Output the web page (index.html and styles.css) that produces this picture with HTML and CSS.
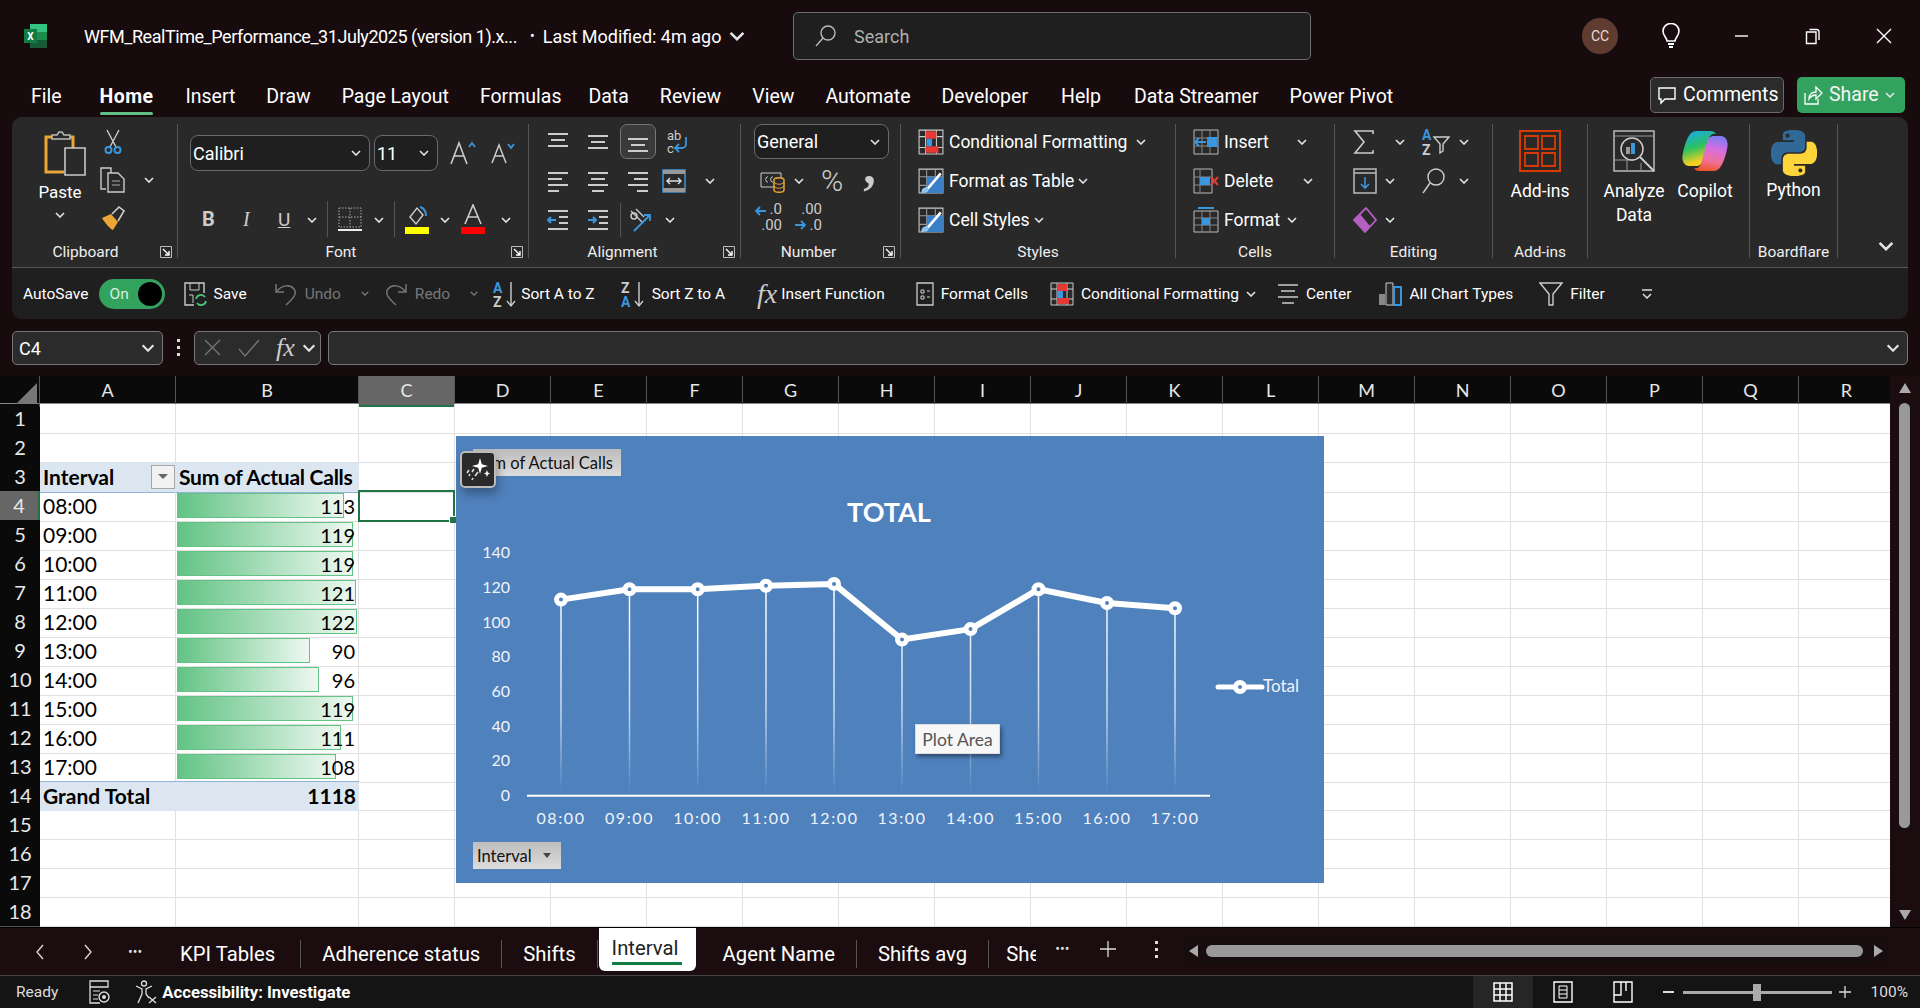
FILE: index.html
```html
<!DOCTYPE html>
<html>
  <head>
    <meta charset="UTF-8">
    <title>WFM_RealTime_Performance</title>
    <link rel="stylesheet" href="styles.css">
  </head>
  <body>
    <svg class="defs" width="0" height="0">
      <symbol id="chev" viewBox="0 0 10 6"><path d="M1 1l4 4 4-4" fill="none" stroke="#e4e4e4" stroke-width="1.6"/></symbol>
      <symbol id="launch" viewBox="0 0 12 12"><path d="M.5.5h11v11H.5z" fill="none" stroke="#bbb"/><path d="M3 3l6 6M9 5v4H5" fill="none" stroke="#fff" stroke-width="1.4"/></symbol>
      <symbol id="al-top" viewBox="0 0 24 24"><path d="M2 4h20M5 10h14M2 16h20" stroke="#ccc" stroke-width="2"/></symbol>
      <symbol id="al-mid" viewBox="0 0 24 24"><path d="M2 6h20M5 12h14M2 18h20" stroke="#ccc" stroke-width="2"/></symbol>
      <symbol id="al-bot" viewBox="0 0 24 24"><path d="M2 9h20M5 15h14M2 21h20" stroke="#ccc" stroke-width="2"/></symbol>
      <symbol id="al-left" viewBox="0 0 24 24"><path d="M2 4h20M2 10h14M2 16h20M2 22h11" stroke="#ccc" stroke-width="2"/></symbol>
      <symbol id="al-center" viewBox="0 0 24 24"><path d="M2 4h20M5 10h14M2 16h20M6 22h12" stroke="#ccc" stroke-width="2"/></symbol>
      <symbol id="al-right" viewBox="0 0 24 24"><path d="M2 4h20M8 10h14M2 16h20M11 22h11" stroke="#ccc" stroke-width="2"/></symbol>
      <symbol id="cf" viewBox="0 0 24 24"><path d="M1 1h22v22H1z" fill="#2a2a2a" stroke="#ccc"/><path d="M7 1v22M17 1v22M1 7h22M1 17h22" stroke="#ccc"/><path d="M7 2h10v7H7zM7 16h12v6H7z" fill="#e53935"/><path d="M8 9h5v7H8z" fill="#3a96dd"/></symbol>
      <symbol id="brushgrid" viewBox="0 0 24 24"><path d="M1 1h22v22H1z" fill="none" stroke="#ccc"/><path d="M8 1v22M16 1v22M1 8h22M1 16h22" stroke="#999"/><path d="M8 8h15v15H8z" fill="#3a80c8"/><path d="M21 5L9 19" stroke="#fff" stroke-width="2.4"/><path d="M3 23c0-4 3-6 6-5l1 2c-1 3-4 3-7 3z" fill="#8dc4ee"/></symbol>
    </svg>

    <div class="app">
      <header class="titlebar">
        <svg class="xl-logo" width="26" height="26" viewBox="0 0 26 26">
          <path d="M7 1h17v24H7z" fill="#1d8a4e"/><path d="M7 1h17v8H7z" fill="#33c481"/><path d="M7 17h17v8H7z" fill="#185c37"/>
          <path d="M1 6h13v14H1z" fill="#107c41"/>
          <text x="7.5" y="17" text-anchor="middle" class="xl-x">X</text>
        </svg>
        <span class="doc-name">WFM_RealTime_Performance_31July2025 (version 1).x...</span>
        <span class="doc-dot">•</span>
        <span class="doc-mod">Last Modified: 4m ago</span>
        <svg class="doc-chev" width="16" height="10"><use href="#chev"/></svg>
        <div class="search">
          <svg width="24" height="24" viewBox="0 0 24 24"><circle cx="14" cy="9" r="7" fill="none" stroke="#bbb" stroke-width="1.4"/><path d="M9 14l-7 8" stroke="#bbb" stroke-width="1.4"/></svg>
          <span>Search</span>
        </div>
        <div class="avatar">CC</div>
        <svg class="bulb" width="20" height="26" viewBox="0 0 20 26"><path d="M6 18c0-3-4-5-4-10a8 7.500 0 0 1 16 0c0 5-4 7-4 10z" fill="none" stroke="#fff" stroke-width="1.6"/><path d="M7 21h6M8 24h4" stroke="#fff" stroke-width="1.8"/></svg>
        <svg class="winbtn min" width="16" height="16"><path d="M1 8h13" stroke="#fff" stroke-width="1.4"/></svg>
        <svg class="winbtn" width="16" height="18"><path d="M1.500 5h9.500v11.500H1.500z" fill="none" stroke="#fff" stroke-width="1.4"/><path d="M4.500 2.500h7a2.500 2.500 0 0 1 2.500 2.500v8" fill="none" stroke="#fff" stroke-width="1.4"/></svg>
        <svg class="winbtn close" width="16" height="16"><path d="M1 1l14 14M15 1L1 15" stroke="#fff" stroke-width="1.4"/></svg>
      </header>

      <nav class="menu">
        <span class="menu-item">File</span>
        <span class="menu-item active">Home</span>
        <span class="menu-item">Insert</span>
        <span class="menu-item">Draw</span>
        <span class="menu-item">Page Layout</span>
        <span class="menu-item">Formulas</span>
        <span class="menu-item m-data">Data</span>
        <span class="menu-item">Review</span>
        <span class="menu-item">View</span>
        <span class="menu-item">Automate</span>
        <span class="menu-item">Developer</span>
        <span class="menu-item m-help">Help</span>
        <span class="menu-item m-stream">Data Streamer</span>
        <span class="menu-item">Power Pivot</span>
        <div class="menu-actions">
          <button class="btn-comments">
            <svg width="20" height="20" viewBox="0 0 20 20"><path d="M2 3h16v11H8l-4 4v-4H2z" fill="none" stroke="#fff" stroke-width="1.4"/></svg>
            Comments
          </button>
          <button class="btn-share">
            <svg width="20" height="22" viewBox="0 0 20 22"><path d="M2 9v11h13v-5" fill="none" stroke="#fff" stroke-width="1.3"/><path d="M6 15c0-5 3-7 7-7V3l6 6-6 6v-4c-3 0-5 1-7 4z" fill="none" stroke="#fff" stroke-width="1.3"/></svg>
            Share
            <svg width="10" height="6"><use href="#chev"/></svg>
          </button>
        </div>
      </nav>

      <section class="ribbon">
        <div class="ribbon-top">
          <div class="group g-clip">
            <div class="clip-body">
              <div class="paste">
                <svg width="42" height="46" viewBox="0 0 42 46"><path d="M20 42H2V7h27v12" fill="none" stroke="#eba637" stroke-width="3"/><path d="M8 9V5h5l2-3h3l2 3h6v4z" fill="#292929" stroke="#bbb" stroke-width="1.5"/><path d="M21 18h20v27H21z" fill="#292929" stroke="#c8c8c8" stroke-width="1.6"/></svg>
                <span>Paste</span>
                <svg width="10" height="6"><use href="#chev"/></svg>
              </div>
              <div class="clip-tools">
                <svg width="18" height="26" viewBox="0 0 18 26"><path d="M3 1l9 17M15 1L6 18" stroke="#ccc" stroke-width="1.4"/><circle cx="4.500" cy="21" r="3" fill="none" stroke="#3a96dd" stroke-width="2"/><circle cx="13.500" cy="21" r="3" fill="none" stroke="#3a96dd" stroke-width="2"/></svg>
                <div class="clip-copy">
                  <svg width="26" height="26" viewBox="0 0 26 26"><path d="M6 22H1V1h10v5" fill="none" stroke="#ccc" stroke-width="1.4"/><path d="M8 6h10l6 6v13H8z" fill="#292929" stroke="#ccc" stroke-width="1.4"/><path d="M12 14h8M12 18h8" stroke="#aaa"/></svg>
                  <svg width="10" height="6"><use href="#chev"/></svg>
                </div>
                <svg width="26" height="26" viewBox="0 0 26 26"><path d="M2 13l9-4 7 8-5 8c-3-1-8-7-11-12z" fill="#eba637"/><path d="M12 9l7-7 5 4-6 10" fill="none" stroke="#ccc" stroke-width="1.6"/></svg>
              </div>
            </div>
            <div class="glabel">Clipboard</div>
            <svg class="launcher" width="12" height="12"><use href="#launch"/></svg>
          </div>

          <div class="group g-font">
            <div class="font-rows">
              <div class="font-row1">
                <div class="select sel-font"><span>Calibri</span><svg width="10" height="6"><use href="#chev"/></svg></div>
                <div class="select sel-size"><span>11</span><svg width="10" height="6"><use href="#chev"/></svg></div>
                <svg class="size-a" width="28" height="26" viewBox="0 0 28 26"><path d="M2 24L10 3l8 21M5 16h10" fill="none" stroke="#ccc" stroke-width="1.600"/><path d="M20 7l3-4 3 4" fill="none" stroke="#3a96dd" stroke-width="1.800"/></svg>
                <svg class="size-b" width="24" height="24" viewBox="0 0 24 24"><path d="M1 22L8 4l7 18M4 15h8" fill="none" stroke="#ccc" stroke-width="1.500"/><path d="M17 3l3 4 3-4" fill="none" stroke="#3a96dd" stroke-width="1.800"/></svg>
              </div>
              <div class="font-row2">
                <b class="f-b">B</b>
                <i class="f-i">I</i>
                <u class="f-u">U</u>
                <svg class="ch" width="10" height="6"><use href="#chev"/></svg>
                <span class="vsep"></span>
                <svg width="24" height="26" viewBox="0 0 24 26"><path d="M1 2h22v19H1zM12 2v19M1 11h22" fill="none" stroke="#aaa" stroke-dasharray="1.500 1.500"/><path d="M0 24h24" stroke="#eee" stroke-width="2"/></svg>
                <svg class="ch" width="10" height="6"><use href="#chev"/></svg>
                <span class="vsep"></span>
                <svg width="24" height="30" viewBox="0 0 24 30"><path d="M5 13l7-9 6 7-7 9z" fill="none" stroke="#ccc" stroke-width="1.4"/><path d="M15 3c4 1 6 4 6 9" fill="none" stroke="#3a96dd" stroke-width="2"/><path d="M0 23h24v7H0z" fill="#ff0"/></svg>
                <svg class="ch" width="10" height="6"><use href="#chev"/></svg>
                <svg width="24" height="30" viewBox="0 0 24 30"><path d="M4 20L12 1l8 19M7 13h10" fill="none" stroke="#ccc" stroke-width="1.6"/><path d="M0 23h24v7H0z" fill="#f00"/></svg>
                <svg class="ch" width="10" height="6"><use href="#chev"/></svg>
              </div>
            </div>
            <div class="glabel">Font</div>
            <svg class="launcher" width="12" height="12"><use href="#launch"/></svg>
          </div>

          <div class="group g-align">
            <div class="tool-rows">
              <div class="trow">
                <svg class="ic" width="24" height="24"><use href="#al-top"/></svg>
                <svg class="ic" width="24" height="24"><use href="#al-mid"/></svg>
                <span class="ic-on"><svg width="24" height="24"><use href="#al-bot"/></svg></span>
                <svg class="ic" width="24" height="28" viewBox="0 0 24 28"><text x="1" y="12" class="tiny">ab</text><text x="1" y="25" class="tiny">c</text><path d="M20 9v7a4 4 0 0 1-4 4H9m4-4l-4 4 4 4" fill="none" stroke="#3a96dd" stroke-width="1.800"/></svg>
              </div>
              <div class="trow">
                <svg class="ic" width="24" height="24"><use href="#al-left"/></svg>
                <svg class="ic" width="24" height="24"><use href="#al-center"/></svg>
                <svg class="ic" width="24" height="24"><use href="#al-right"/></svg>
                <svg class="ic merge" width="24" height="24" viewBox="0 0 24 24"><path d="M1 1h22v22H1z" fill="none" stroke="#3a96dd" stroke-width="1.500"/><path d="M1 1h22v4H1zM1 19h22v4H1z" fill="#999"/><path d="M5 12h14M8 9l-3 3 3 3M16 9l3 3-3 3" fill="none" stroke="#ddd" stroke-width="1.400"/></svg>
                <svg class="ch ch-far" width="10" height="6"><use href="#chev"/></svg>
              </div>
              <div class="trow">
                <svg class="ic" width="24" height="24" viewBox="0 0 24 24"><path d="M2 3h20M13 9h9M13 15h9M2 21h20" stroke="#ccc" stroke-width="2"/><path d="M10 12H2m3-3l-3 3 3 3" fill="none" stroke="#3a96dd" stroke-width="2"/></svg>
                <svg class="ic" width="24" height="24" viewBox="0 0 24 24"><path d="M2 3h20M13 9h9M13 15h9M2 21h20" stroke="#ccc" stroke-width="2"/><path d="M2 12h8M7 9l3 3-3 3" fill="none" stroke="#3a96dd" stroke-width="2"/></svg>
                <span class="vsep short"></span>
                <svg class="ic" width="26" height="26" viewBox="0 0 26 26"><path d="M3 4l12 12M8 2l8 8" stroke="#ccc" stroke-width="1.400"/><circle cx="6" cy="9" r="3" fill="none" stroke="#ccc" stroke-width="1.400"/><path d="M6 24L22 8m-6 0h6v6" fill="none" stroke="#3a96dd" stroke-width="1.800"/></svg>
                <svg class="ch" width="10" height="6"><use href="#chev"/></svg>
              </div>
            </div>
            <div class="glabel">Alignment</div>
            <svg class="launcher" width="12" height="12"><use href="#launch"/></svg>
          </div>

          <div class="group g-number">
            <div class="num-rows">
              <div class="select sel-num"><span>General</span><svg width="10" height="6"><use href="#chev"/></svg></div>
              <div class="num-row2">
                <svg width="26" height="24" viewBox="0 0 26 24"><path d="M1 4h20v14H1z" fill="none" stroke="#ccc"/><path d="M8 8c-3-1-3 6 0 5M13 8c-3-1-3 6 0 5" fill="none" stroke="#ccc"/><path d="M14 11c0-3 10-3 10 0v10c0 3-10 3-10 0z" fill="#292929" stroke="#eba637" stroke-width="1.500"/><path d="M14 13c2 3 8 3 10 0M14 17c2 3 8 3 10 0" fill="none" stroke="#eba637"/></svg>
                <svg class="ch" width="10" height="6"><use href="#chev"/></svg>
                <span class="pct">%</span>
                <span class="comma">,</span>
              </div>
              <div class="num-row3">
                <span class="dec"><svg width="13" height="12" viewBox="0 0 13 12"><path d="M12 6H2m4-4L2 6l4 4" fill="none" stroke="#3a96dd" stroke-width="1.800"/></svg><span class="dec-a">.0</span><span class="dec-b">.00</span></span>
                <span class="dec"><svg class="dec-down" width="13" height="12" viewBox="0 0 13 12"><path d="M1 6h10M7 2l4 4-4 4" fill="none" stroke="#3a96dd" stroke-width="1.800"/></svg><span class="dec-a">.00</span><span class="dec-b">.0</span></span>
              </div>
            </div>
            <div class="glabel">Number</div>
            <svg class="launcher" width="12" height="12"><use href="#launch"/></svg>
          </div>

          <div class="group g-styles">
            <div class="list-rows">
              <div class="lrow"><svg width="26" height="26"><use href="#cf"/></svg><span>Conditional Formatting</span><svg width="10" height="6"><use href="#chev"/></svg></div>
              <div class="lrow"><svg width="26" height="26"><use href="#brushgrid"/></svg><span>Format as Table</span><svg width="10" height="6"><use href="#chev"/></svg></div>
              <div class="lrow"><svg width="26" height="26"><use href="#brushgrid"/></svg><span>Cell Styles</span><svg width="10" height="6"><use href="#chev"/></svg></div>
            </div>
            <div class="glabel">Styles</div>
          </div>

          <div class="group g-cells">
            <div class="list-rows">
              <div class="lrow"><svg width="26" height="26" viewBox="0 0 26 26"><path d="M1 1h24v24H1z" fill="none" stroke="#bbb"/><path d="M1 9h24M1 17h24M9 1v24M17 1v24" stroke="#888"/><path d="M14 8h10v10H14z" fill="#3a96dd"/><path d="M13 13H2m4-4l-4 4 4 4" fill="none" stroke="#3a96dd" stroke-width="1.800"/></svg><span>Insert</span><svg class="c-ins" width="10" height="6"><use href="#chev"/></svg></div>
              <div class="lrow"><svg width="26" height="26" viewBox="0 0 26 26"><path d="M1 1h18v24H1z" fill="none" stroke="#bbb"/><path d="M1 9h18M1 17h18M7 1v24" stroke="#888"/><path d="M7 9h10v8H7z" fill="#3a96dd"/><path d="M18 9l7 8M25 9l-7 8" stroke="#e53935" stroke-width="2"/></svg><span>Delete</span><svg class="c-del" width="10" height="6"><use href="#chev"/></svg></div>
              <div class="lrow"><svg width="26" height="26" viewBox="0 0 26 26"><path d="M1 4h24v21H1z" fill="none" stroke="#bbb"/><path d="M1 11h24M1 18h24M9 4v21M17 4v21" stroke="#888"/><path d="M9 11h8v7H9z" fill="#3a96dd"/><path d="M5 1h16" stroke="#3a96dd" stroke-width="2"/></svg><span>Format</span><svg class="c-fmt" width="10" height="6"><use href="#chev"/></svg></div>
            </div>
            <div class="glabel">Cells</div>
          </div>

          <div class="group g-edit">
            <div class="edit-grid">
              <svg width="22" height="26" viewBox="0 0 22 26"><path d="M20 5V2H2l9 11-9 11h18v-3" fill="none" stroke="#ccc" stroke-width="1.600"/></svg>
              <svg class="edit-first" width="10" height="6"><use href="#chev"/></svg>
              <span class="sortf"><svg width="28" height="30" viewBox="0 0 28 30"><text x="0" y="13" class="az-a">A</text><text x="0" y="28" class="az-z">Z</text><path d="M12 10h15l-6 7v7l-3 2v-9z" fill="none" stroke="#ccc" stroke-width="1.400"/></svg></span>
              <svg width="10" height="6"><use href="#chev"/></svg>
              <span class="fillb"><svg width="24" height="26" viewBox="0 0 24 26"><path d="M1 1h22v24H1z" fill="none" stroke="#bbb" stroke-width="1.500"/><path d="M1 5h22" stroke="#bbb" stroke-width="1.500"/><path d="M12 9v11M8 16l4 4 4-4" fill="none" stroke="#3a96dd" stroke-width="1.600"/></svg><svg width="10" height="6"><use href="#chev"/></svg></span>
              <i></i>
              <svg width="24" height="28" viewBox="0 0 24 28"><circle cx="14" cy="10" r="8" fill="none" stroke="#ccc" stroke-width="1.400"/><path d="M8 16L1 26" stroke="#ccc" stroke-width="1.400"/></svg>
              <svg width="10" height="6"><use href="#chev"/></svg>
              <span class="fillb"><svg width="24" height="26" viewBox="0 0 24 26"><path d="M1 13L13 1l10 12-11 12z" fill="none" stroke="#b45fc1" stroke-width="1.800"/><path d="M1 13l6-6 10 12-5 6z" fill="#b45fc1"/></svg><svg width="10" height="6"><use href="#chev"/></svg></span>
            </div>
            <div class="glabel">Editing</div>
          </div>

          <div class="group g-addins">
            <div class="big">
              <svg width="42" height="42" viewBox="0 0 42 42"><path d="M1 1h40v40H1z" fill="none" stroke="#d83b01" stroke-width="2"/><path d="M6 6h13v13H6zM23 6h13v13H23zM6 23h13v13H6zM23 23h13v13H23z" fill="none" stroke="#d83b01" stroke-width="1.800"/></svg>
              <span>Add-ins</span>
            </div>
            <div class="glabel">Add-ins</div>
          </div>

          <div class="group g-ai">
            <div class="ai-row">
              <div class="big">
                <svg width="42" height="42" viewBox="0 0 42 42"><path d="M1 1h40v40H1z" fill="none" stroke="#bbb" stroke-width="1.500"/><path d="M1 6h40M1 30h20M14 30v11M28 33v8" stroke="#999"/><circle cx="19" cy="19" r="11" fill="#292929" stroke="#ccc" stroke-width="1.500"/><path d="M27 27l14 14" stroke="#ccc" stroke-width="2"/><path d="M13 17h4v7h-4z" fill="#999"/><path d="M18 13h4v11h-4z" fill="#3a96dd"/></svg>
                <span>Analyze<br>Data</span>
              </div>
              <div class="big big-copilot">
                <svg width="46" height="42" viewBox="0 0 46 42">
                  <defs>
                    <linearGradient id="cpA" x1="0.100" y1="0" x2="0.400" y2="1"><stop offset="0" stop-color="#1aa8f2"/><stop offset="0.500" stop-color="#2cc25e"/><stop offset="0.900" stop-color="#f5d020"/></linearGradient>
                    <linearGradient id="cpB" x1="0.600" y1="0" x2="0.400" y2="1"><stop offset="0" stop-color="#7d7cf0"/><stop offset="0.350" stop-color="#d66de2"/><stop offset="0.700" stop-color="#f0709c"/><stop offset="1" stop-color="#f0562c"/></linearGradient>
                  </defs>
                  <path d="M14 1h14c3 0 5 1 6 3-3-1-6 1-7 4l-6 22c-1 4-3 6-7 6H7C2 36-1 30 1 23 3 13 7 1 14 1z" fill="url(#cpA)"/>
                  <path d="M32 41H18c-3 0-5-1-6-3 3 1 6-1 7-4l6-22c1-4 3-6 7-6h7c5 0 8 6 6 13-2 10-6 22-13 22z" fill="url(#cpB)"/>
                </svg>
                <span>Copilot</span>
              </div>
            </div>
          </div>

          <div class="group g-py">
            <div class="big big-py">
              <svg width="46" height="46" viewBox="0 0 24 24">
                <path fill-rule="evenodd" fill="#306998" d="M14.25.18l.9.2.73.26.59.3.45.32.34.34.25.34.16.33.1.3.04.26.02.2-.01.13V8.500l-.05.63-.13.55-.21.46-.26.38-.3.31-.33.25-.35.19-.35.14-.33.1-.3.07-.26.04-.21.02H8.770l-.69.05-.59.14-.5.22-.41.27-.33.32-.27.35-.2.36-.15.37-.1.35-.07.32-.04.27-.02.21v3.060H3.170l-.21-.03-.28-.07-.32-.12-.35-.18-.36-.26-.36-.36-.35-.46-.32-.59-.28-.73-.21-.88-.14-1.050-.05-1.230.06-1.220.16-1.040.24-.87.32-.71.36-.57.4-.44.42-.33.42-.24.4-.16.36-.1.32-.05.24-.01h.16l.06.01h8.160v-.83H6.180l-.01-2.750-.02-.37.05-.34.11-.31.17-.28.25-.26.31-.23.38-.2.44-.18.51-.15.58-.12.64-.1.71-.06.77-.04.84-.02 1.270.05zm-6.300 1.980l-.23.33-.08.41.08.41.23.34.33.22.41.09.41-.09.33-.22.23-.34.08-.41-.08-.41-.23-.33-.33-.22-.41-.09-.41.09z"/>
                <path fill-rule="evenodd" fill="#ffd43b" d="M21.040 6.110l.28.06.32.12.35.18.36.27.36.35.35.47.32.59.28.73.21.88.14 1.040.05 1.230-.06 1.230-.16 1.040-.24.86-.32.71-.36.57-.4.45-.42.33-.42.24-.4.16-.36.09-.32.05-.24.02-.16-.01h-8.220v.82h5.840l.01 2.760.02.36-.05.34-.11.31-.17.29-.25.25-.31.24-.38.2-.44.17-.51.15-.58.13-.64.09-.71.07-.77.04-.84.01-1.270-.04-1.070-.14-.9-.2-.73-.25-.59-.3-.45-.33-.34-.34-.25-.34-.16-.33-.1-.3-.04-.25-.02-.2.01-.13v-5.340l.05-.64.13-.54.21-.46.26-.38.3-.32.33-.24.35-.2.35-.14.33-.1.3-.06.26-.04.21-.02.13-.01h5.840l.69-.05.59-.14.5-.21.41-.28.33-.32.27-.35.2-.36.15-.36.1-.35.07-.32.04-.28.02-.21V6.070h2.090l.14.01zm-6.470 14.250l-.23.33-.08.41.08.41.23.33.33.23.41.08.41-.08.33-.23.23-.33.08-.41-.08-.41-.23-.33-.33-.23-.41-.08-.41.08z"/>
              </svg>
              <span>Python</span>
            </div>
            <div class="glabel">Boardflare</div>
          </div>
          <svg class="collapse" width="16" height="10"><use href="#chev"/></svg>
        </div>

        <div class="qat">
          <span class="q-auto">AutoSave</span>
          <span class="toggle"><span>On</span><i></i></span>
          <span class="qitem q-save"><svg width="24" height="24" viewBox="0 0 24 24"><path d="M10 23H1V1h19v10" fill="none" stroke="#ccc" stroke-width="1.400"/><path d="M6 1v7h9V1M5 13h4v8" fill="none" stroke="#ccc"/><path d="M12 17a5 5 0 0 1 9-2m1 4a5 5 0 0 1-9 2" fill="none" stroke="#4ec37a" stroke-width="1.800"/></svg>Save</span>
          <span class="qitem off q-undo"><svg width="24" height="24" viewBox="0 0 24 24"><path d="M2 2v8h8" fill="none" stroke="#777" stroke-width="1.500"/><path d="M3 9c5-6 13-7 17-2 3 4 1 8-8 16" fill="none" stroke="#777" stroke-width="1.500"/></svg>Undo<svg class="c-off" width="8" height="5"><use href="#chev"/></svg></span>
          <span class="qitem off q-redo"><svg width="24" height="24" viewBox="0 0 24 24"><path d="M22 2v8h-8" fill="none" stroke="#777" stroke-width="1.500"/><path d="M21 9C16 3 8 2 4 7c-3 4-1 8 8 16" fill="none" stroke="#777" stroke-width="1.500"/></svg>Redo<svg class="c-off" width="8" height="5"><use href="#chev"/></svg></span>
          <span class="qitem q-az"><svg width="24" height="28" viewBox="0 0 24 28"><text x="0" y="13" class="az-a">A</text><text x="0" y="27" class="az-z">Z</text><path d="M18 2v24M14 21l4 5 4-5" fill="none" stroke="#ccc" stroke-width="1.400"/></svg>Sort A to Z</span>
          <span class="qitem q-za"><svg width="24" height="28" viewBox="0 0 24 28"><text x="0" y="13" class="az-z">Z</text><text x="0" y="27" class="az-a">A</text><path d="M18 2v24M14 21l4 5 4-5" fill="none" stroke="#ccc" stroke-width="1.400"/></svg>Sort Z to A</span>
          <span class="qitem q-fx"><em class="fx">fx</em>Insert Function</span>
          <span class="qitem q-fc"><svg width="18" height="24" viewBox="0 0 18 24"><path d="M1 1h16v22H1z" fill="none" stroke="#ccc" stroke-width="1.300"/><path d="M5 8h3v3H5zM5 14h3v3H5z" fill="none" stroke="#ccc"/><path d="M11 9h3M11 15h3" stroke="#ccc"/></svg>Format Cells</span>
          <span class="qitem q-cf"><svg width="24" height="24"><use href="#cf"/></svg>Conditional Formatting<svg width="10" height="6"><use href="#chev"/></svg></span>
          <span class="qitem q-center"><svg width="22" height="22" viewBox="0 0 22 22"><path d="M1 2h20M4 8h14M1 14h20M5 20h12" stroke="#ccc" stroke-width="1.600"/></svg>Center</span>
          <span class="qitem q-chart"><svg width="24" height="24" viewBox="0 0 24 24"><path d="M1 12h6v11H1z" fill="#888"/><path d="M8 1h7v22H8z" fill="#2a2a2a" stroke="#ccc"/><path d="M16 5h7v18h-7z" fill="#2a2a2a" stroke="#3a96dd" stroke-width="2"/></svg>All Chart Types</span>
          <span class="qitem q-filter"><svg width="24" height="26" viewBox="0 0 24 26"><path d="M1 2h22l-9 11v11h-4V13z" fill="none" stroke="#ccc" stroke-width="1.400"/></svg>Filter</span>
          <svg class="q-more" width="12" height="10" viewBox="0 0 12 10"><path d="M1 1h10M2 5l4 4 4-4" fill="none" stroke="#ddd" stroke-width="1.500"/></svg>
        </div>
      </section>

      <div class="formula">
        <div class="namebox"><span>C4</span><svg width="14" height="8"><use href="#chev"/></svg></div>
        <span class="fdots"></span>
        <div class="fbtns">
          <svg width="18" height="18"><path d="M1 1l15 15M16 1L1 16" stroke="#777" stroke-width="1.300"/></svg>
          <svg width="22" height="18"><path d="M1 10l6 7L21 1" fill="none" stroke="#777" stroke-width="1.300"/></svg>
          <em class="fx">fx</em>
          <svg width="14" height="8"><use href="#chev"/></svg>
        </div>
        <div class="finput"><svg width="14" height="8"><use href="#chev"/></svg></div>
      </div>

      <main class="sheet">
        <div class="grid">
          <div class="colhead">
            <span class="corner"><i></i></span>
            <span>A</span><span>B</span><span class="sel">C</span><span>D</span><span>E</span><span>F</span><span>G</span><span>H</span><span>I</span><span>J</span><span>K</span><span>L</span><span>M</span><span>N</span><span>O</span><span>P</span><span>Q</span><span>R</span>
          </div>
          <div class="row"><span class="rh">1</span><span class="c"></span><span class="c"></span><span class="c"></span><span class="rest"></span></div>
          <div class="row"><span class="rh">2</span><span class="c"></span><span class="c"></span><span class="c"></span><span class="rest"></span></div>
          <div class="row pivot-head"><span class="rh">3</span><span class="c b">Interval<i class="filter"></i></span><span class="c b sum-head">Sum of Actual Calls</span><span class="c"></span><span class="rest"></span></div>
          <div class="row"><span class="rh on">4</span><span class="c">08:00</span><span class="c v"><i class="bar" style="width:167px"></i><span>113</span></span><span class="c cur"><i></i></span><span class="rest"></span></div>
          <div class="row"><span class="rh">5</span><span class="c">09:00</span><span class="c v"><i class="bar" style="width:176px"></i><span>119</span></span><span class="c"></span><span class="rest"></span></div>
          <div class="row"><span class="rh">6</span><span class="c">10:00</span><span class="c v"><i class="bar" style="width:176px"></i><span>119</span></span><span class="c"></span><span class="rest"></span></div>
          <div class="row"><span class="rh">7</span><span class="c">11:00</span><span class="c v"><i class="bar" style="width:179px"></i><span>121</span></span><span class="c"></span><span class="rest"></span></div>
          <div class="row"><span class="rh">8</span><span class="c">12:00</span><span class="c v"><i class="bar" style="width:180px"></i><span>122</span></span><span class="c"></span><span class="rest"></span></div>
          <div class="row"><span class="rh">9</span><span class="c">13:00</span><span class="c v"><i class="bar" style="width:133px"></i><span>90</span></span><span class="c"></span><span class="rest"></span></div>
          <div class="row"><span class="rh">10</span><span class="c">14:00</span><span class="c v"><i class="bar" style="width:142px"></i><span>96</span></span><span class="c"></span><span class="rest"></span></div>
          <div class="row"><span class="rh">11</span><span class="c">15:00</span><span class="c v"><i class="bar" style="width:176px"></i><span>119</span></span><span class="c"></span><span class="rest"></span></div>
          <div class="row"><span class="rh">12</span><span class="c">16:00</span><span class="c v"><i class="bar" style="width:164px"></i><span>111</span></span><span class="c"></span><span class="rest"></span></div>
          <div class="row"><span class="rh">13</span><span class="c">17:00</span><span class="c v"><i class="bar" style="width:159px"></i><span>108</span></span><span class="c"></span><span class="rest"></span></div>
          <div class="row pivot-total"><span class="rh">14</span><span class="c b">Grand Total</span><span class="c b v"><span>1118</span></span><span class="c"></span><span class="rest"></span></div>
          <div class="row"><span class="rh">15</span><span class="c"></span><span class="c"></span><span class="c"></span><span class="rest"></span></div>
          <div class="row"><span class="rh">16</span><span class="c"></span><span class="c"></span><span class="c"></span><span class="rest"></span></div>
          <div class="row"><span class="rh">17</span><span class="c"></span><span class="c"></span><span class="c"></span><span class="rest"></span></div>
          <div class="row"><span class="rh">18</span><span class="c"></span><span class="c"></span><span class="c"></span><span class="rest"></span></div>

          <div class="chart">
            <svg class="chart-svg" width="868" height="447" viewBox="0 0 868 447">
              <defs>
                <linearGradient id="drop" gradientUnits="userSpaceOnUse" x1="0" y1="150" x2="0" y2="358"><stop offset="0" stop-color="#fff"/><stop offset="0.600" stop-color="#fff" stop-opacity="0.700"/><stop offset="1" stop-color="#fff" stop-opacity="0"/></linearGradient>
              </defs>
              <text x="433" y="86" class="ch-title">TOTAL</text>
              <g class="ch-y">
                <text x="54" y="122">140</text><text x="54" y="157">120</text><text x="54" y="192">100</text><text x="54" y="226">80</text><text x="54" y="261">60</text><text x="54" y="296">40</text><text x="54" y="330">20</text><text x="54" y="365">0</text>
              </g>
              <g class="ch-drop">
                <path d="M105 163v197M173.500 153v207M241.700 153v207M310 150v210M378 148v212M446 203v157M514.500 193v167M582.500 153v207M651 167v193M719 172v188"/>
              </g>
              <path d="M71 359.700h683" stroke="#fff" stroke-width="2"/>
              <polyline class="ch-line" points="105,163.600 173.500,153.200 241.700,153.200 310,149.700 378,147.900 446,203.500 514.500,193.100 582.500,153.200 651,167 719,172.200"/>
              <g class="ch-dots">
                <circle cx="105" cy="163.600" r="4.500"/><circle cx="173.500" cy="153.200" r="4.500"/><circle cx="241.700" cy="153.200" r="4.500"/><circle cx="310" cy="149.700" r="4.500"/><circle cx="378" cy="147.900" r="4.500"/><circle cx="446" cy="203.500" r="4.500"/><circle cx="514.500" cy="193.100" r="4.500"/><circle cx="582.500" cy="153.200" r="4.500"/><circle cx="651" cy="167" r="4.500"/><circle cx="719" cy="172.200" r="4.500"/>
              </g>
              <g class="ch-x">
                <text x="105" y="388">08:00</text><text x="173.500" y="388">09:00</text><text x="241.700" y="388">10:00</text><text x="310" y="388">11:00</text><text x="378" y="388">12:00</text><text x="446" y="388">13:00</text><text x="514.500" y="388">14:00</text><text x="582.500" y="388">15:00</text><text x="651" y="388">16:00</text><text x="719" y="388">17:00</text>
              </g>
              <path d="M762 251h44" stroke="#fff" stroke-width="5" stroke-linecap="round"/>
              <circle class="ch-leg" cx="784" cy="251" r="4.500"/>
              <text x="807" y="256" class="ch-total">Total</text>
            </svg>
            <div class="fieldbtn f-sum">Sum of Actual Calls</div>
            <div class="fieldbtn f-int">Interval<i></i></div>
            <div class="plot-tip">Plot Area</div>
            <div class="quick">
              <svg width="26" height="26" viewBox="0 0 26 26"><path d="M15 1l1.800 6.200L23 9l-6.200 1.800L15 17l-1.800-6.200L7 9l6.200-1.800zM22 13l.9 2.600L25 16.500l-2.100.9L22 20l-.9-2.600L19 16.500l2.100-.9z" fill="#fff"/><path d="M9 12l-2 3M5 17l-1 2M13 15l-3 4M8 21l-1 2M4 13l-2 3" stroke="#ddd" stroke-width="1.600"/></svg>
            </div>
          </div>
        </div>
        <div class="vscroll">
          <i class="arr-up"></i>
          <i class="vthumb"></i>
          <i class="arr-down"></i>
        </div>
      </main>

      <div class="tabbar">
        <div class="tab-nav">
          <svg width="10" height="18"><path d="M8 2L2 9l6 7" fill="none" stroke="#ddd" stroke-width="1.300"/></svg>
          <svg width="10" height="18"><path d="M2 2l6 7-6 7" fill="none" stroke="#ddd" stroke-width="1.300"/></svg>
          <span class="dots">•••</span>
        </div>
        <span class="tab">KPI Tables</span>
        <span class="tab">Adherence status</span>
        <span class="tab">Shifts</span>
        <span class="tab active">Interval</span>
        <span class="tab tab-next">Agent Name</span>
        <span class="tab">Shifts avg</span>
        <span class="tab tab-cut">Shee</span>
        <span class="dots dots-r">•••</span>
        <svg class="tab-plus" width="18" height="18"><path d="M9 1v16M1 9h16" stroke="#ddd" stroke-width="1.300"/></svg>
        <span class="tab-menu"></span>
        <div class="hscroll">
          <i class="arr-left"></i>
          <i class="hthumb"></i>
          <i class="arr-right"></i>
        </div>
      </div>

      <footer class="status">
        <span class="st-ready">Ready</span>
        <svg class="st-macro" width="22" height="24" viewBox="0 0 22 24"><path d="M2 1h18v6H2zM2 7v16h10" fill="none" stroke="#ddd" stroke-width="1.300"/><path d="M5 11h7M5 15h5M5 19h5" stroke="#ddd"/><circle cx="16" cy="17" r="5" fill="none" stroke="#ddd" stroke-width="1.400"/><circle cx="16" cy="17" r="2" fill="#ddd"/></svg>
        <svg class="st-acc" width="22" height="24" viewBox="0 0 22 24"><circle cx="9" cy="3.500" r="2.500" fill="none" stroke="#ddd" stroke-width="1.300"/><path d="M1 6l6 3v5l-4 9M17 6l-6 3v5l3 4" fill="none" stroke="#ddd" stroke-width="1.300"/><path d="M14 17l7 6M21 17l-7 6" stroke="#ddd" stroke-width="1.300"/></svg>
        <b class="st-text">Accessibility: Investigate</b>
        <div class="st-right">
          <span class="view on"><svg width="20" height="20" viewBox="0 0 20 20"><path d="M1 1h18v18H1zM1 7h18M1 13h18M7 1v18M13 1v18" fill="none" stroke="#fff" stroke-width="1.500"/></svg></span>
          <span class="view"><svg width="20" height="22" viewBox="0 0 20 22"><path d="M1 1h18v20H1z" fill="none" stroke="#fff" stroke-width="1.400"/><path d="M6 5h8v12H6zM6 9h8M6 13h8" fill="none" stroke="#fff"/></svg></span>
          <span class="view"><svg width="20" height="22" viewBox="0 0 20 22"><path d="M1 1h18v20H1zM1 14h7V1M13 1v9" fill="none" stroke="#fff" stroke-width="1.400"/></svg></span>
          <span class="zoom-minus"></span>
          <span class="slider"><i></i></span>
          <svg width="14" height="14"><path d="M7 1v12M1 7h12" stroke="#ddd" stroke-width="1.300"/></svg>
          <span class="st-pct">100%</span>
        </div>
      </footer>
    </div>
  </body>
</html>
```

FILE: styles.css
```css
* { box-sizing: border-box; }
html, body { margin: 0; height: 100%; overflow: hidden; }
body { background: #170b0d; color: #fff; font-family: Roboto, "Noto Sans", sans-serif; }
.defs { position: absolute; }
svg { display: block; flex: none; }
button { font: inherit; color: inherit; }

.app { display: flex; flex-direction: column; width: 1920px; height: 1008px; }

/* title bar */
.titlebar { display: flex; align-items: center; height: 72px; padding-left: 23px; font-size: 18px; }
.xl-x { font: bold 10px Roboto, sans-serif; fill: #fff; }
.doc-name { margin-left: 35px; width: 433px; white-space: nowrap; letter-spacing: -.45px; }
.doc-dot { margin-left: 13px; font-size: 14px; }
.doc-mod { margin-left: 8px; white-space: nowrap; }
.doc-chev { margin-left: 8px; }
.search { display: flex; align-items: center; gap: 16px; position: absolute; left: 793px; top: 12px; width: 518px; height: 48px; padding-left: 20px; background: #1f1f1f; border: 1px solid #6d6d6d; border-radius: 5px; color: #b0b0b0; }
.avatar { margin-left: auto; width: 36px; height: 36px; line-height: 36px; border-radius: 50%; background: #5f3b30; font-size: 14px; text-align: center; color: #e8dcd8; }
.bulb { margin-left: 43px; }
.winbtn { margin-left: 55px; }
.winbtn.min { margin-left: 53px; }
.winbtn.close { margin-right: 28px; margin-left: 55px; }

/* menu */
.menu { display: flex; align-items: center; gap: 31px; height: 45px; padding-left: 31px; font-size: 19.500px; }
.menu-item { position: relative; line-height: 45px; white-space: nowrap; margin-top: 3px; }
.menu-item.active { font-weight: 700; margin: 3px 1px 0 7px; letter-spacing: .4px; }
.menu-item.active::after { content: ""; position: absolute; left: 0; right: 0; bottom: 4px; height: 3px; background: #5fbf87; border-radius: 2px; }
.m-data { margin-left: -4px; }
.m-help { margin-left: 2px; }
.m-stream { margin-left: 2px; }
.menu-actions { display: flex; gap: 13px; margin-left: auto; padding-right: 15px; }
.btn-comments, .btn-share { display: flex; align-items: center; height: 36px; border-radius: 5px; gap: 6px; }
.btn-comments { width: 134px; padding: 0 0 0 6px; background: #2b2b2b; border: 1px solid #6a6a6a; }
.btn-share { width: 108px; padding: 0 6px; background: #33a25f; border: 0; color: #f4f4f4; }

/* ribbon */
.ribbon { margin: 0 12px; height: 202px; background: #292929; border-radius: 10px; overflow: hidden; font-size: 17px; }
.ribbon-top { display: flex; position: relative; height: 150px; padding-top: 7px; }
.group { position: relative; display: flex; flex-direction: column; height: 134px; border-right: 1px solid #555; }
.glabel { margin-top: auto; margin-bottom: -4px; height: 20px; line-height: 20px; text-align: center; font-size: 15.500px; color: #eee; }
.launcher { position: absolute; right: 5px; bottom: 0; }
.collapse { position: absolute; right: 14px; bottom: 16px; }
.ch { margin-top: 1px; }

.g-clip { width: 166px; }
.g-clip .glabel { padding-right: 18px; }
.clip-body { display: flex; gap: 12px; padding: 6px 0 0 32px; }
.paste { display: flex; flex-direction: column; align-items: center; width: 42px; font-size: 17px; }
.paste span { margin: 4px 10px 0 0; line-height: 24px; }
.paste svg:last-child { margin: 8px 10px 0 0; }
.clip-tools { display: flex; flex-direction: column; gap: 12px; padding-left: 2px; width: 60px; }
.clip-tools > svg:first-child { margin-left: 4px; margin-top: -1px; }
.clip-copy { display: flex; align-items: center; gap: 18px; }

.g-font { width: 351px; }
.g-font .glabel { padding-right: 24px; }
.font-rows { padding: 11px 0 0 12px; }
.font-row1 { display: flex; align-items: center; height: 36px; gap: 4px; }
.select { display: flex; align-items: center; justify-content: space-between; height: 36px; padding: 0 8px 0 2px; border: 1px solid #6a6a6a; border-radius: 8px; background: #1f1f1f; font-size: 18px; }
.sel-font { width: 180px; }
.sel-size { width: 64px; }
.size-a { margin-left: 7px; }
.size-b { margin-left: 10px; }
.font-row2 { display: flex; align-items: center; height: 36px; margin-top: 30px; padding-left: 12px; }
.f-b, .f-i, .f-u { font-size: 20px; color: #ccc; width: 38px; }
.f-i { font-family: "Liberation Serif", serif; padding-left: 3px; }
.f-u { width: 29px; font-size: 19px; }
.font-row2 .vsep { margin: 0 10px; }
.font-row2 > svg:nth-of-type(6) { margin-left: 11px; }
.font-row2 > svg:nth-of-type(5) { margin-left: 11px; }
.font-row2 > svg:nth-of-type(7) { margin-left: 16px; }
.font-row2 > svg:nth-of-type(3) { margin-left: 12px; }
.vsep { display: block; width: 1px; height: 36px; background: #555; }
.vsep.short { height: 34px; margin: 0 -9px 0 -6px; }

.g-align { width: 212px; }
.g-align .glabel { padding-right: 24px; }
.tool-rows, .list-rows { display: flex; flex-direction: column; gap: 4px; }
.tool-rows { padding-left: 17px; }
.trow { display: flex; align-items: center; gap: 16px; height: 35px; }
.trow .ch { margin-left: -5px; }
.trow .merge { margin-left: -4px; }
.trow .ch-far { margin-left: 3px; }
.ic-on { display: flex; align-items: center; justify-content: center; width: 36px; height: 35px; margin: 0 -6px; border: 1px solid #777; border-radius: 7px; background: #3a3a3a; }

.g-number { width: 160px; }
.g-number .glabel { padding-right: 24px; }
.num-rows { margin-left: 13px; }
.sel-num { width: 135px; height: 35px; }
.num-row2 { display: flex; align-items: center; gap: 8px; height: 35px; margin-top: 4px; padding-left: 6px; }
.pct { margin-left: 9px; font-size: 30px; color: #ccc; font-weight: 300; }
.comma { margin-left: 12px; font-size: 50px; line-height: 20px; margin-top: -30px; color: #ccc; font-family: "Liberation Serif", serif; font-weight: bold; }
.num-row3 { display: flex; gap: 12px; height: 35px; margin-top: 4px; }
.dec { position: relative; display: block; width: 28px; height: 32px; font-size: 15px; line-height: 14px; color: #ccc; }
.dec svg { position: absolute; left: 0; top: 3px; }
.dec svg.dec-down { top: 17px; }
.dec-a { position: absolute; right: 0; top: 0; }
.dec-b { position: absolute; right: 0; top: 16px; }

.g-styles { width: 275px; }
.list-rows { padding: 0 0 0 17px; }
.lrow { display: flex; align-items: center; gap: 5px; height: 35px; white-space: nowrap; font-size: 17.500px; }
.g-styles .lrow svg:last-child { margin-left: 4px; }
.g-styles .lrow + .lrow svg:last-child { margin-left: -1px; }
.g-cells { width: 159px; }
.c-ins { margin-left: 23px; }
.c-del { margin-left: 25px; }
.c-fmt { margin-left: 2px; }
.g-edit { width: 158px; }
.edit-grid { display: grid; grid-template-columns: 24px 29px 29px 10px; column-gap: 8px; padding: 0 0 0 18px; align-items: center; grid-auto-rows: 35px; row-gap: 4px; }
.edit-first { margin-left: 10px; }
.fillb { display: flex; align-items: center; gap: 8px; }
.az-a { font: bold 14px Roboto, sans-serif; fill: #3a96dd; }
.az-z { font: bold 14px Roboto, sans-serif; fill: #ccc; }
.tiny { font: 13px Roboto, sans-serif; fill: #ccc; }
.g-addins { width: 95px; }
.big { display: flex; flex-direction: column; align-items: center; padding-top: 6px; font-size: 17.500px; line-height: 23.500px; text-align: center; }
.big span { margin-top: 8px; }
.big-py svg { margin-bottom: -5px; }
.g-ai { width: 162px; }
.ai-row { display: flex; gap: 11px; padding-left: 16px; }
.ai-row .big { width: 60px; }
.g-py { width: 88px; }

/* quick access row */
.qat { display: flex; align-items: center; height: 52px; padding-left: 11px; background: #1f1f1f; border-top: 1px solid #555; font-size: 15.500px; white-space: nowrap; }
.qitem { display: inline-flex; align-items: center; gap: 7px; }
.q-auto { margin-right: 11px; }
.toggle { display: flex; align-items: center; justify-content: space-between; width: 66px; height: 30px; padding: 0 3px 0 10px; border-radius: 15px; background: #33a25f; color: #d8f0e0; }
.toggle i { width: 24px; height: 24px; border-radius: 50%; background: #000; }
.q-save { margin-left: 19px; gap: 5px; }
.q-undo { margin-left: 27px; }
.q-redo { margin-left: 15px; }
.q-az { margin-left: 15px; gap: 4px; }
.q-za { margin-left: 26px; }
.q-fx { margin-left: 32px; gap: 4px; }
.q-fc { margin-left: 31px; }
.q-cf { margin-left: 22px; }
.q-center { margin-left: 21px; }
.q-chart { margin-left: 27px; }
.q-filter { margin-left: 26px; }
.q-more { margin-left: 36px; }
.off { color: #777; }
.c-off { margin-left: 13px; opacity: .5; }
.fx { font: italic 28px "Liberation Serif", serif; color: #ccc; }

/* formula bar */
.formula { display: flex; align-items: stretch; height: 34px; margin: 12px 12px 11px; }
.namebox, .fbtns, .finput { display: flex; align-items: center; background: #2b2b2b; border: 1px solid #777; border-radius: 5px; }
.namebox { width: 151px; padding: 0 7px 0 6px; justify-content: space-between; font-size: 18px; }
.fdots { position: relative; width: 31px; }
.fdots::before { content: ""; position: absolute; left: 14px; top: 8px; width: 3px; height: 3px; background: #ddd; box-shadow: 0 7px #ddd, 0 14px #ddd; }
.fbtns { width: 127px; padding-left: 9px; gap: 16px; }
.fbtns .fx { font-size: 26px; margin-right: -9px; }
.finput { flex: 1; margin-left: 7px; justify-content: flex-end; padding-right: 7px; }

/* sheet */
.sheet { display: flex; height: 551px; }
.grid { position: relative; width: 1890px; background: #fff; overflow: hidden; color: #000; font-family: Lato, Roboto, sans-serif; font-size: 21px; }
.colhead { display: grid; grid-template-columns: 40px 136px 183px repeat(16, 96px); height: 28px; background: #0a0a0a; color: #e8e8e8; border-bottom: 1px solid #888; }
.colhead span { line-height: 29px; text-align: center; border-right: 1px solid #555; font-size: 18px; }
.colhead .sel { background: #666; border-bottom: 2px solid #217346; }
.corner { position: relative; }
.corner i { position: absolute; right: 2px; bottom: 3px; border-style: solid; border-width: 0 0 21px 21px; border-color: transparent transparent #777 transparent; }
.row { display: grid; grid-template-columns: 40px 136px 183px 96px 1fr; height: 29px; }
.rh { background: #0a0a0a; color: #e8e8e8; text-align: center; line-height: 29px; font-size: 20px; border-bottom: 1px solid #555; }
.rh.on { background: #666; border-right: 2px solid #217346; }
.c { position: relative; padding-left: 3px; line-height: 30px; white-space: nowrap; border-right: 1px solid #e0e0e0; border-bottom: 1px solid #e0e0e0; }
.c.b { font-weight: 700; }
.c.v { text-align: right; padding-right: 3px; font-size: 20px; }
.c.b.v { font-size: 21px; }
.c.v span { position: relative; }
.sum-head { letter-spacing: -.26px; }
.rest { background: repeating-linear-gradient(to right, transparent 0 95px, #e0e0e0 95px 96px); border-bottom: 1px solid #e0e0e0; }
.pivot-head .c:nth-child(-n+3), .pivot-total .c:nth-child(-n+3) { background: #dce6f1; border-right: 0; }
.pivot-head .c:nth-child(-n+3) { border-bottom: 1px solid #95b3d7; }
.pivot-total .c:nth-child(-n+3) { border-top: 1px solid #95b3d7; border-bottom: 0; line-height: 28px; }
.filter { position: absolute; right: 1px; top: 3px; width: 24px; height: 24px; background: #f2f2f2; border: 1px solid #a6a6a6; }
.filter::after { content: ""; position: absolute; left: 6px; top: 8px; border-style: solid; border-width: 5px 5px 0; border-color: #666 transparent transparent; }
.bar { position: absolute; left: 1px; top: 2px; height: 25px; background: linear-gradient(to right, #63c384, #eef8f1); border: 1px solid #63c384; }
.cur { z-index: 2; }
.cur i { position: absolute; inset: -1px; border: 2px solid #217346; }
.cur i::after { content: ""; position: absolute; right: -3px; bottom: -3px; width: 6px; height: 6px; background: #217346; border: 1px solid #fff; border-width: 1px 0 0 1px; }

/* chart */
.chart { position: absolute; left: 456px; top: 60px; width: 868px; height: 447px; background: #4f81bd; }
.ch-title { font: bold 27px Lato, sans-serif; fill: #fff; text-anchor: middle; }
.ch-y text { font: 16px Lato, sans-serif; fill: #f0f4fa; text-anchor: end; }
.ch-x text { font: 16px Lato, sans-serif; fill: #f0f4fa; text-anchor: middle; letter-spacing: 1.600px; }
.ch-drop path { stroke: url(#drop); stroke-width: 1.500; fill: none; }
.ch-line { fill: none; stroke: #fff; stroke-width: 6; stroke-linejoin: round; }
.ch-dots circle, .ch-leg { fill: #4f81bd; stroke: #fff; stroke-width: 5; }
.ch-total { font: 17px Lato, sans-serif; fill: #f0f4fa; }
.fieldbtn { position: absolute; display: flex; align-items: center; height: 27px; padding-left: 4px; background: linear-gradient(to bottom, #bdbdbd, #dcdcdc); color: #111; font: 16.500px Lato, sans-serif; white-space: nowrap; }
.f-sum { left: 17px; top: 13px; width: 148px; justify-content: flex-end; padding-right: 8px; }
.f-int { left: 17px; top: 406px; width: 88px; }
.f-int i { margin-left: 11px; border-style: solid; border-width: 5px 4px 0; border-color: #444 transparent transparent; }
.plot-tip { position: absolute; left: 459px; top: 288px; width: 85px; height: 30px; text-align: center; background: #f7f7f7; color: #555; font: 17.500px/30px Lato, sans-serif; border: 1px solid #ddd; box-shadow: 2px 3px 4px rgba(0, 0, 0, .4); }
.quick { position: absolute; left: 4px; top: 15px; display: flex; align-items: center; justify-content: center; width: 36px; height: 37px; background: #2a2a2a; border: 2px solid #bbb; border-radius: 5px; box-shadow: 2px 6px 10px rgba(0, 0, 0, .3); }

/* scrollbars */
.vscroll { position: relative; flex: 1; background: #1b0d0f; }
.vthumb { position: absolute; left: 9px; top: 27px; width: 11px; height: 425px; border-radius: 6px; background: #999; }
.arr-up, .arr-down { position: absolute; left: 9px; border-style: solid; border-color: transparent; }
.arr-up { top: 7px; border-width: 0 6px 10px; border-bottom-color: #aaa; }
.arr-down { bottom: 7px; border-width: 10px 6px 0; border-top-color: #aaa; }

/* sheet tabs */
.tabbar { position: relative; display: flex; align-items: center; height: 48px; font-size: 20.300px; background: #1b0d0f; border-top: 1px solid #000; }
.tab-nav { display: flex; align-items: center; gap: 38px; padding-left: 35px; width: 180px; }
.dots { font-size: 14px; color: #ddd; }
.tab-nav .dots { margin-left: -3px; }
.tab { height: 28px; line-height: 28px; padding: 0 21px; border-right: 1px solid #555; white-space: nowrap; margin-top: 4px; }
.tabbar .tab:nth-of-type(1) { padding-left: 0; padding-right: 25px; }
.tab.active { position: relative; height: 43px; margin: -4px 6px 0 1px; width: 97px; padding: 0 0 0 13px; line-height: 40px; background: #fff; color: #222; border: 0; border-radius: 0 0 6px 6px; }
.tab.active::after { content: ""; position: absolute; left: 13px; right: 14px; bottom: 6px; height: 3px; background: #107c41; }
.tab-cut { padding: 0 0 0 17px; border: 0; overflow: hidden; box-sizing: content-box; width: 30px; }
.dots-r { margin-left: 19px; margin-top: -6px; }
.tab-plus { margin-left: 30px; margin-top: -6px; }
.tab-menu { position: relative; margin-left: 38px; width: 4px; margin-top: -6px; height: 20px; }
.tab-menu::before { content: ""; position: absolute; left: 0; top: 2px; width: 3px; height: 3px; background: #ddd; box-shadow: 0 7px #ddd, 0 14px #ddd; }
.hscroll { position: absolute; left: 1182px; top: 10px; width: 708px; height: 26px; border-radius: 10px; background: #170c0e; }
.hthumb { position: absolute; left: 24px; top: 7px; width: 657px; height: 12px; border-radius: 6px; background: #999; }
.arr-left, .arr-right { position: absolute; top: 7px; border-style: solid; border-color: transparent; }
.arr-left { left: 7px; border-width: 6px 9px 6px 0; border-right-color: #aaa; }
.arr-right { right: 7px; border-width: 6px 0 6px 9px; border-left-color: #aaa; }

/* status bar */
.status { display: flex; align-items: center; height: 33px; padding-left: 16px; background: #141414; border-top: 1px solid #444; font-size: 15.500px; color: #ddd; }
.st-macro { margin-left: 30px; }
.st-acc { margin-left: 25px; }
.st-text { margin-left: 5px; color: #fff; font-size: 16.700px; white-space: nowrap; }
.st-right { display: flex; align-items: center; margin-left: auto; height: 100%; padding-right: 12px; }
.view { display: flex; align-items: center; justify-content: center; width: 60px; height: 100%; }
.view.on { background: #262626; }
.zoom-minus { width: 11px; height: 2px; margin-left: 10px; background: #ddd; }
.slider { position: relative; width: 149px; height: 3px; margin: 0 6px 0 9px; background: #aaa; }
.slider i { position: absolute; left: 70px; top: -7px; width: 8px; height: 17px; background: #aaa; }
.st-pct { margin-left: 19px; }
```
